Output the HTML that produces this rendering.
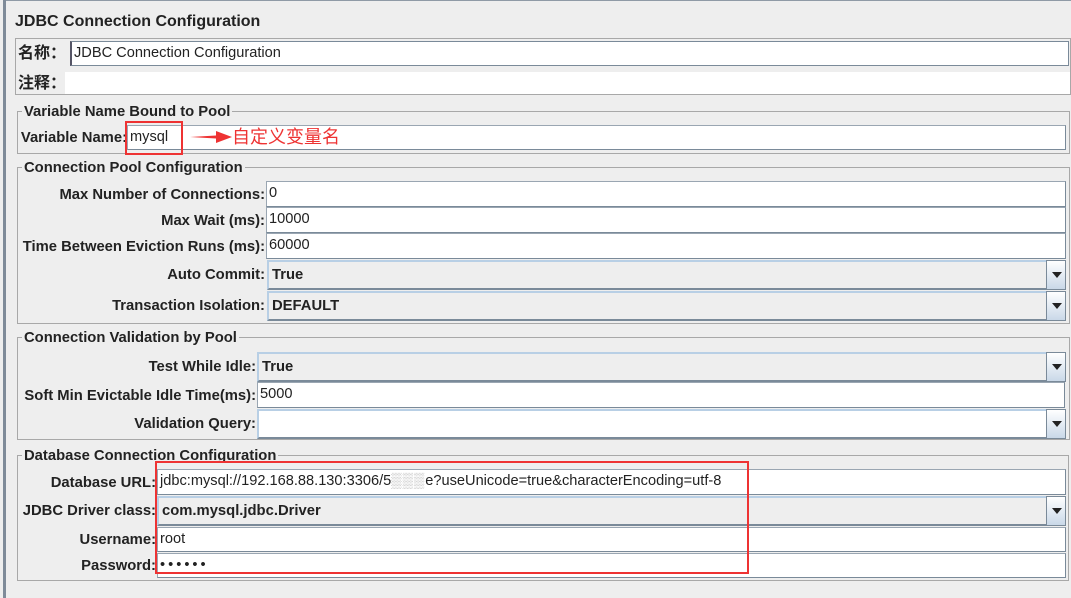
<!DOCTYPE html>
<html><head><meta charset="utf-8"><style>
*{box-sizing:border-box;margin:0;padding:0}
body{width:1071px;height:598px;background:#eeeeee;position:relative;overflow:hidden;font-family:"Liberation Sans","Noto Sans CJK SC",sans-serif;color:#222}
.a{position:absolute}
.lbl{position:absolute;font-weight:bold;font-size:14.8px;text-align:right;white-space:nowrap;line-height:16px;margin-top:1px}
.in{position:absolute;background:#fff;border:1px solid #7a8a99;border-top-color:#9aa6b2;border-left-color:#9aa6b2;font-size:14.6px;line-height:23px;padding-left:2px;white-space:nowrap;overflow:hidden}
.cb{position:absolute;background:#eeeeee;border:2px solid #b8cfe5;border-bottom-color:#7a8a99;font-size:14.8px;font-weight:bold;padding-left:3px;white-space:nowrap}
.cb .bt{position:absolute;right:-2px;top:-2px;bottom:-2px;width:20px;background:linear-gradient(#fff,#c9d8e8);border:1px solid #7a8a99}
.cb .bt:after{content:"";position:absolute;left:5px;top:50%;margin-top:-3px;border-left:5px solid transparent;border-right:5px solid transparent;border-top:6px solid #222}
.fs{position:absolute;border:1px solid #a8a8a8}
.lg{position:absolute;background:#eeeeee;font-weight:bold;font-size:14.8px;padding:0 2px;line-height:16px;margin-top:1px}
.red{position:absolute;border:2px solid #ee3333}
</style></head><body>
<div class="a" style="left:3px;top:0;width:3px;height:598px;background:#7f8b99"></div>
<div class="a" style="left:6px;top:0;width:1065px;height:1px;background:#8f9aa6"></div>
<div class="a" style="left:15px;top:13px;font-weight:bold;font-size:16px">JDBC Connection Configuration</div>

<div class="fs" style="left:15px;top:38px;width:1056px;height:57px"></div>
<div class="lbl" style="left:18px;top:45px;font-size:16px">名称：</div>
<div class="in" style="left:70px;top:41px;width:999px;height:25px;border:1px solid #7a8a99;border-left:2px solid #556">JDBC Connection Configuration</div>
<div class="lbl" style="left:18px;top:75px;font-size:16px">注释：</div>
<div class="a" style="left:65px;top:72px;width:1005px;height:22px;background:#fff"></div>

<div class="fs" style="left:17px;top:111px;width:1053px;height:43px"></div>
<div class="lg" style="left:22px;top:103px">Variable Name Bound to Pool</div>
<div class="lbl" style="right:944px;top:129px">Variable Name:</div>
<div class="in" style="left:127px;top:125px;width:939px;height:25px">mysql</div>
<div class="red" style="left:125px;top:121px;width:58px;height:34px"></div>
<svg class="a" style="left:188px;top:128px" width="46" height="18"><path d="M2 9 L28 7.5 L28 3 L44 9 L28 15 L28 10.5 Z" fill="#ee3333"/></svg>
<div class="a" style="left:232px;top:124px;font-size:18px;color:#ee3333;font-family:'Noto Sans CJK SC',sans-serif;line-height:24px">自定义变量名</div>

<div class="fs" style="left:17px;top:167px;width:1053px;height:157px"></div>
<div class="lg" style="left:22px;top:159px">Connection Pool Configuration</div>
<div class="lbl" style="right:806px;top:186px">Max Number of Connections:</div>
<div class="in" style="left:266px;top:181px;width:800px;height:26px">0</div>
<div class="lbl" style="right:806px;top:212px">Max Wait (ms):</div>
<div class="in" style="left:266px;top:207px;width:800px;height:26px">10000</div>
<div class="lbl" style="right:806px;top:238px">Time Between Eviction Runs (ms):</div>
<div class="in" style="left:266px;top:233px;width:800px;height:26px">60000</div>
<div class="lbl" style="right:806px;top:266px">Auto Commit:</div>
<div class="cb" style="left:267px;top:260px;width:799px;height:30px;line-height:26px">True<div class="bt"></div></div>
<div class="lbl" style="right:806px;top:297px">Transaction Isolation:</div>
<div class="cb" style="left:267px;top:291px;width:799px;height:30px;line-height:26px">DEFAULT<div class="bt"></div></div>

<div class="fs" style="left:17px;top:337px;width:1053px;height:103px"></div>
<div class="lg" style="left:22px;top:329px">Connection Validation by Pool</div>
<div class="lbl" style="right:815px;top:358px">Test While Idle:</div>
<div class="cb" style="left:257px;top:352px;width:809px;height:30px;line-height:26px">True<div class="bt"></div></div>
<div class="lbl" style="right:815px;top:387px">Soft Min Evictable Idle Time(ms):</div>
<div class="in" style="left:257px;top:382px;width:808px;height:26px">5000</div>
<div class="lbl" style="right:815px;top:415px">Validation Query:</div>
<div class="cb" style="left:257px;top:409px;width:809px;height:30px;background:#fff"><div class="bt"></div></div>

<div class="fs" style="left:17px;top:455px;width:1052px;height:126px"></div>
<div class="lg" style="left:22px;top:447px">Database Connection Configuration</div>
<div class="lbl" style="right:915px;top:474px">Database URL:</div>
<div class="in" style="left:157px;top:469px;width:909px;height:26px">jdbc:mysql://192.168.88.130:3306/5<span style="color:#bbb;letter-spacing:1px">▒▒▒</span>e?useUnicode=true&amp;characterEncoding=utf-8</div>
<div class="lbl" style="right:915px;top:502px">JDBC Driver class:</div>
<div class="cb" style="left:157px;top:496px;width:909px;height:30px;line-height:26px">com.mysql.jdbc.Driver<div class="bt"></div></div>
<div class="lbl" style="right:915px;top:531px">Username:</div>
<div class="in" style="left:157px;top:527px;width:909px;height:25px">root</div>
<div class="lbl" style="right:915px;top:557px">Password:</div>
<div class="in" style="left:157px;top:553px;width:909px;height:25px;letter-spacing:3px">••••••</div>
<div class="red" style="left:155px;top:461px;width:594px;height:113px"></div>
</body></html>
